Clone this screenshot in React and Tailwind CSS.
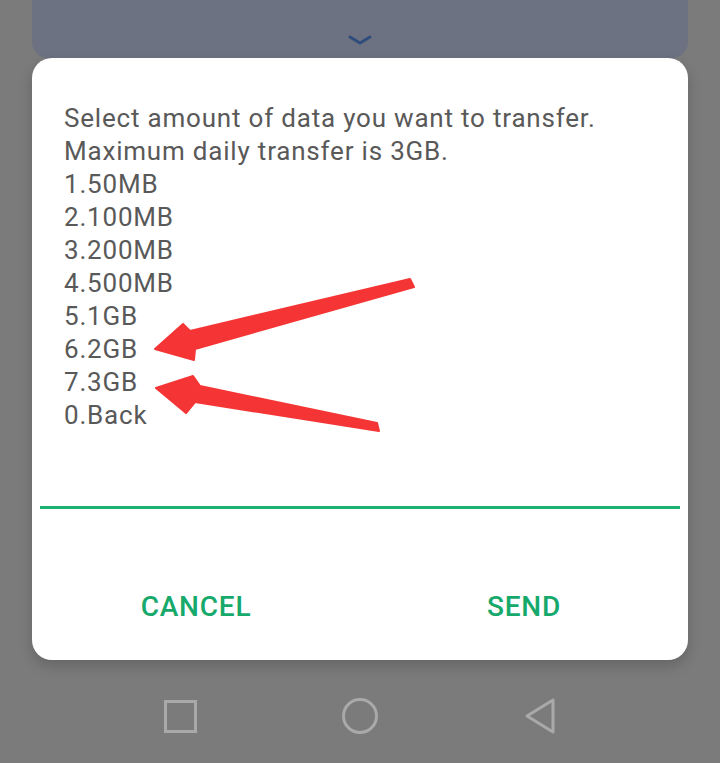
import React from 'react';

const lines = [
  'Select amount of data you want to transfer.',
  'Maximum daily transfer is 3GB.',
  '1.50MB',
  '2.100MB',
  '3.200MB',
  '4.500MB',
  '5.1GB',
  '6.2GB',
  '7.3GB',
  '0.Back',
];

const Arrows = () => (
  <svg className="absolute left-0 top-0 pointer-events-none" width="720" height="763" viewBox="0 0 720 763">
    <g fill="#f53535" stroke="#f53535" strokeWidth="2" strokeLinejoin="round">
      <polygon points="410,279 414,287 195,349 194,360 155,349 183,324 190,331" />
      <polygon points="156,388 193,376 200,386 377,423 379,431 195,402 186,413" />
    </g>
  </svg>
);

const NavBar = () => (
  <div className="flex-1 flex justify-center items-center pt-[8px]">
    <div className="w-[180px] flex justify-center">
      <svg width="36" height="36" viewBox="0 0 36 36">
        <rect x="3.5" y="3.5" width="30" height="30" fill="none" stroke="#a9a9a9" strokeWidth="3" />
      </svg>
    </div>
    <div className="w-[180px] flex justify-center">
      <svg width="38" height="38" viewBox="0 0 38 38">
        <circle cx="19" cy="19" r="16.5" fill="none" stroke="#a9a9a9" strokeWidth="3" />
      </svg>
    </div>
    <div className="w-[180px] flex justify-center">
      <svg width="36" height="38" viewBox="0 0 36 38">
        <polygon points="31,3 31,35 5,19" fill="none" stroke="#a9a9a9" strokeWidth="3" strokeLinejoin="round" />
      </svg>
    </div>
  </div>
);

export default function App() {
  return (
    <div className="relative w-[720px] h-[763px] bg-[#7b7b7b] flex flex-col overflow-hidden font-['Roboto',sans-serif]">
      {/* card behind the dialog */}
      <div className="mx-8 h-[58px] shrink-0 rounded-b-[16px] bg-[#6c7281] flex items-end justify-center pb-[12px]">
        <svg width="26" height="12" viewBox="0 0 26 12">
          <path d="M3 3 L13 9 L23 3" fill="none" stroke="#2f4c7c" strokeWidth="3" strokeLinecap="round" strokeLinejoin="round" />
        </svg>
      </div>

      {/* dialog */}
      <div className="mx-8 h-[602px] shrink-0 bg-white rounded-[20px] shadow-[0_6px_14px_rgba(0,0,0,0.18)] flex flex-col">
        <div className="pt-[44px] px-8 text-[26px] leading-[33px] tracking-[0.8px] text-[#595959]">
          {lines.map((l) => (
            <div key={l}>{l}</div>
          ))}
        </div>
        <div className="mt-[74px] mx-2 h-[3px] bg-[#1bb173]" />
        <div className="mt-[84px] grid grid-cols-2 text-center text-[28px] leading-[28px] tracking-[0.8px] font-medium text-[#17a96c]">
          <span>CANCEL</span>
          <span>SEND</span>
        </div>
      </div>

      <NavBar />
      <Arrows />
    </div>
  );
}
